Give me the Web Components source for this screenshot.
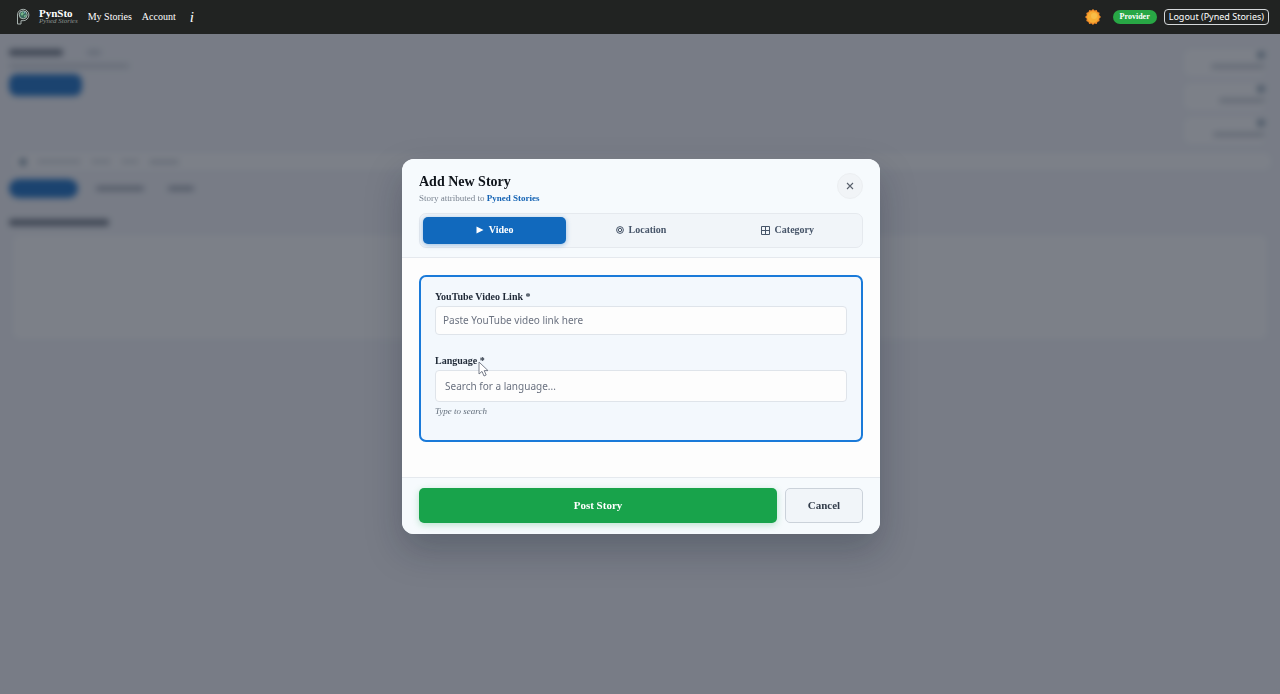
<!DOCTYPE html>
<html lang="en">
<head>
<meta charset="utf-8">
<title>PynSto</title>
<style>
html,body{margin:0;height:100%;background:#f5f6fa}
body{font:10px/12px "Liberation Serif",serif;color:#1f2937}
</style>
</head>
<body>
<pyn-app></pyn-app>
<script>
function define(name, html, after) {
  const t = document.createElement('template');
  t.innerHTML = '<style>*{box-sizing:border-box}</style>' + html;
  customElements.define(name, class extends HTMLElement {
    constructor() {
      super();
      this.attachShadow({mode: 'open'}).append(t.content.cloneNode(true));
    }
    connectedCallback() { if (after) after(this, this.shadowRoot); }
  });
}

define('pyn-header', `
<style>
:host{display:block;position:relative;z-index:3;background:#212322;color:#fff}
header{display:flex;align-items:center;height:34px;padding:0 11px 1px 16px}
a{color:inherit;text-decoration:none}
.brand{display:flex;align-items:center;gap:9px;margin-right:10px}
.brand span{display:flex;flex-direction:column}
.brand b{font-size:11px;line-height:10px}
.brand i{font-size:7px;line-height:7px;color:#8f9593}
nav{display:flex;align-items:center;gap:10px;flex:1}
.info{font:italic 15px/16px "Liberation Serif",serif;margin-left:4px}
.sun{border:0;background:none;padding:0;display:flex;margin:1px 12px 0 0}
.pill{background:#28a745;border-radius:8px;font-weight:bold;font-size:8px;line-height:14px;padding:0 7px;margin-right:7px}
.out{font:9px/14px "Noto Sans",sans-serif;color:#fff;background:none;border:1px solid #d5d8da;border-radius:4px;padding:0 4px;height:16px}
</style>
<header>
<a class="brand" href="#">
<svg width="14" height="17" viewBox="0 0 14 17" fill="none"><path d="M1.5 16V7a5.7 5.7 0 1 1 5.7 5.7H5V16z" stroke="#a7b1ae"/><circle cx="7.2" cy="6.8" r="4" fill="#39685c" stroke="#c4cecb" stroke-width=".8"/><path d="M4.5 6l2-2 1.5 1.5L6 8zM8 7.5l2-1-.4 2.3L8 9z" fill="#76b58b"/><path d="M7.5 3.6l2 1.2-1 1z" fill="#80b6d2"/></svg>
<span><b>PynSto</b><i>Pyned Stories</i></span></a>
<nav><a href="#">My Stories</a><a href="#">Account</a><a class="info" href="#" aria-label="Information">i</a></nav>
<button class="sun" aria-label="Switch theme"><svg width="16" height="16" viewBox="0 0 16 16"><path d="M8 0l1.6 1.4L11.7.9l.8 2 2.1.8-.4 2.2L16 8l-1.8 1.8.4 2.3-2.1.8-.9 2.1-2.2-.4L8 16l-1.6-1.4-2.2.4-.8-2.1-2.1-.9.5-2.2L0 8l1.8-1.8-.5-2.3 2.2-.8.8-2.1 2.1.5z" fill="#f28c28"/><circle cx="8" cy="8" r="5.8" fill="#f7ae34"/><circle cx="9" cy="7" r="3" fill="#f8bd48"/></svg></button>
<span class="pill">Provider</span>
<button class="out">Logout (Pyned Stories)</button>
</header>`);

define('story-page', `
<style>
:host{display:block;padding:11px 9px}
.top{display:flex;justify-content:space-between}
.bar{height:5px;border-radius:3px;background:#ccd1d8}
.line{display:flex;align-items:center;gap:24px}
.add,.tab{background:#2878c8;border-radius:8px;width:73px;height:22px}
.dark{background:#7c8490;height:7px}
.stats{display:grid;gap:7px;padding:4px 5px 0 0}
.stat{width:82px;height:27px;border-radius:6px;background:#fff;display:flex;flex-direction:column;align-items:flex-end;gap:5px;padding:2px 1px}
.dot{width:8px;height:8px;border-radius:4px;background:#98aab9}
.filter{background:#fff;height:17px;margin:9px 0 9px 4px;border-radius:6px;display:flex;align-items:center;gap:10px;padding-left:6px}
.tab{width:69px;height:19px;border-radius:10px}
.cards{display:grid;grid-template-columns:repeat(3,1fr);gap:10px;margin-top:9px;padding:0 4px}
.card{height:104px;background:#fff;border-radius:6px}
</style>
<section aria-hidden="true">
<div class="top"><div><div class="line" style="padding-top:4px"><div class="bar dark" style="width:54px"></div><div class="bar" style="width:14px"></div></div>
<div class="bar" style="width:120px;height:4px;margin-top:8px"></div><div class="add" style="margin-top:6px"></div></div>
<div class="stats"><div class="stat"><div class="dot"></div><div class="bar" style="width:54px"></div></div><div class="stat"><div class="dot"></div><div class="bar" style="width:46px"></div></div><div class="stat"><div class="dot"></div><div class="bar" style="width:52px"></div></div></div></div>
<div class="filter"><div class="dot"></div><div class="bar" style="width:44px;height:3px"></div><div class="bar" style="width:20px;height:3px"></div><div class="bar" style="width:18px;height:3px"></div><div class="bar" style="width:30px;height:4px"></div></div>
<div class="line" style="gap:18px"><div class="tab"></div><div class="bar" style="width:48px;background:#a8afba"></div><div class="bar" style="width:26px;background:#a8afba;margin-left:6px"></div></div>
<div class="bar dark" style="width:100px;margin-top:21px"></div>
<div class="cards"><div class="card"></div><div class="card"></div><div class="card"></div></div>
</section>`);

define('step-tab', `
<style>
:host{display:block;flex:1}
button{width:100%;height:27px;border:0;border-radius:5px;background:none;color:#475569;font:bold 10px/12px "Liberation Serif",serif;display:flex;align-items:center;justify-content:center;gap:5px;padding:0}
:host([active]) button{background:#1169bd;color:#fff;box-shadow:0 1px 5px #1169bd66}
::slotted(svg){display:block}
</style>
<button type="button"><slot name="icon"></slot><slot></slot></button>`);

define('form-field', `
<style>
:host{display:block}
label{display:block;font-weight:bold;margin-bottom:3px;line-height:13px}
input{display:block;width:100%;height:29px;border:1px solid #dfe4ea;border-radius:4px;background:#fdfdfd;padding:0 7px;font:10px/14px "Noto Sans",sans-serif;color:#1f2937}
:host([large]) input{height:32px;padding:0 9px}
input::placeholder{color:#6b7280;opacity:1}
p{margin:3px 0 0;font-size:9px;font-style:italic;color:#64707d}
p:empty{display:none}
</style>
<label for="f"></label><input id="f" type="text"><p></p>`, (el, r) => {
  r.querySelector('label').textContent = el.getAttribute('label') + ' *';
  r.querySelector('input').placeholder = el.getAttribute('placeholder');
  r.querySelector('p').textContent = el.getAttribute('hint') || '';
});

define('story-dialog', `
<style>
:host{display:block;width:478px;max-width:calc(100% - 32px);margin-left:2px}
section{background:#fdfdfd;border-radius:12px;overflow:hidden;box-shadow:0 16px 36px #0f172a40}
header{background:#f6fafd;border-bottom:1px solid #e5e9ee;padding:14px 17px 9px}
.head{display:flex;justify-content:space-between;margin-bottom:9px}
h2{font-size:14px;line-height:17px;margin:0;color:#0f141b}
p{font-size:9px;line-height:12px;margin:2px 0 0;color:#7a8491}
p b{color:#1463b4}
.x{width:26px;height:26px;border-radius:50%;border:1px solid #eceff2;background:#f1f4f7;padding:0;display:grid;place-items:center}
.tabs{display:flex;gap:3px;padding:3px;background:#f1f5f9;border:1px solid #e5e9ee;border-radius:7px}
.body{padding:17px 17px 35px}
fieldset{margin:0;border:2px solid #1a7ad9;border-radius:7px;background:#f3f8fd;padding:13px 14px 23px;display:grid;gap:19px;min-width:0}
footer{background:#f6fafd;border-top:1px solid #e5e9ee;padding:10px 17px 11px;display:flex;gap:8px}
footer button{height:35px;border-radius:5px;font:bold 11px/14px "Liberation Serif",serif}
.post{flex:1;border:0;background:#18a34b;color:#fff;box-shadow:0 2px 7px #18a34b44}
.cancel{width:78px;border:1px solid #cbd2da;background:#f1f5f9;color:#333d4b}
</style>
<section role="dialog" aria-labelledby="t">
<header><div class="head"><div><h2 id="t">Add New Story</h2><p>Story attributed to <b>Pyned Stories</b></p></div>
<button class="x" aria-label="Close"><svg width="8" height="8" viewBox="0 0 8 8"><path d="M1 1l6 6M7 1L1 7" stroke="#59616c" stroke-width="1.1"/></svg></button></div>
<div class="tabs">
<step-tab active><svg slot="icon" width="8" height="8" viewBox="0 0 8 8"><path d="M.5.5l7 3.5-7 3.5z" fill="#fff"/></svg>Video</step-tab>
<step-tab><svg slot="icon" width="8" height="8" viewBox="0 0 8 8" fill="none" stroke="#475569"><circle cx="4" cy="4" r="3.4" stroke-width="1"/><circle cx="4" cy="4" r="1.7" stroke-width="1"/></svg>Location</step-tab>
<step-tab><svg slot="icon" width="9" height="9" viewBox="0 0 9 9" fill="none" stroke="#475569"><path d="M.5.5h8v8h-8zM4.5.5v8M.5 4.5h8"/></svg>Category</step-tab>
</div></header>
<div class="body"><fieldset>
<form-field label="YouTube Video Link" placeholder="Paste YouTube video link here"></form-field>
<form-field large label="Language" placeholder="Search for a language..." hint="Type to search"></form-field>
</fieldset></div>
<footer><button class="post">Post Story</button><button class="cancel">Cancel</button></footer>
</section>`);

define('pyn-app', `
<style>
:host{display:block;min-height:100%}
.overlay{position:fixed;inset:0;z-index:2;display:flex;align-items:center;justify-content:center;padding-bottom:2px;box-sizing:border-box;background:rgba(17,23,38,.55);backdrop-filter:blur(3px)}
.cursor{position:fixed;z-index:4;left:calc(50% - 162px);top:calc(50% + 14px);pointer-events:none}
</style>
<pyn-header></pyn-header>
<story-page></story-page>
<div class="overlay"><story-dialog></story-dialog></div>
<svg class="cursor" width="11" height="16" viewBox="0 0 11 16"><path d="M1 1v12l3-2.6 2 4.6 2.2-1-2-4.4H10z" fill="#fff" stroke="#6b7280" stroke-width=".9"/></svg>`);
</script>
</body>
</html>
